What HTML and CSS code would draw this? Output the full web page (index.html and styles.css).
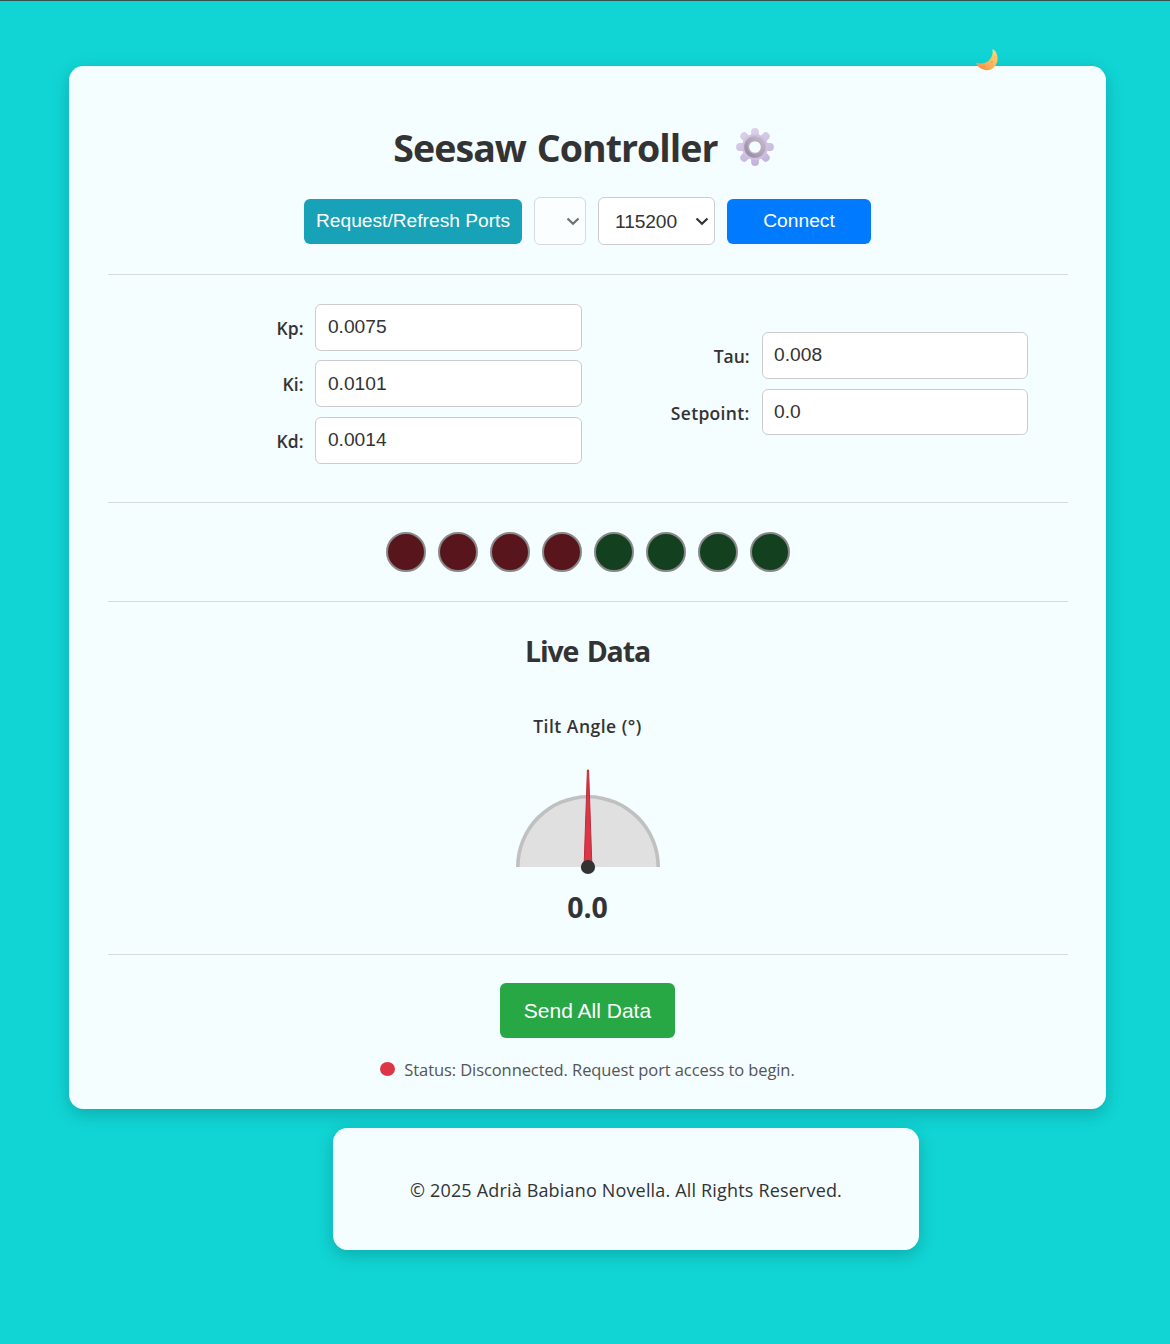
FILE: index.html
```html
<!DOCTYPE html>
<html lang="en">
<head>
<meta charset="utf-8">
<title>Seesaw Controller</title>
<link rel="stylesheet" href="styles.css">
</head>
<body>
<main class="card">
  <button class="theme-toggle" aria-label="Toggle theme">
    <svg width="22" height="22" viewBox="0 0 22 22">
      <defs><linearGradient id="moon" x1="1" y1="0" x2="0.2" y2="1"><stop offset="0" stop-color="#ffdf75"/><stop offset=".55" stop-color="#fbb95c"/><stop offset="1" stop-color="#f5904c"/></linearGradient></defs>
      <path d="M17.200.3C20.500 2.800 21.900 6.700 21.500 11 20.900 17 16.300 21.200 11 21.200 6.300 21.200 1.800 18.400.3 14.600c-.3-1 .3-1.300 1-.9C4 15 9 15 12.700 11.800 16 8.700 17.200 4.500 16.500 1.200c-.1-.8.200-1.200.7-.9z" fill="url(#moon)"/>
      <circle cx="15.800" cy="13.200" r="1.300" fill="#f3a850"/><circle cx="8" cy="17.600" r="1" fill="#ee9448"/><circle cx="18.900" cy="8" r=".8" fill="#f6b55a"/>
    </svg>
  </button>

  <h1 class="title"><span class="title-text">Seesaw Controller</span>
    <svg width="38" height="38" viewBox="0 0 38 38">
      <defs>
        <linearGradient id="teeth" gradientUnits="userSpaceOnUse" x1="12" y1="0" x2="24" y2="38"><stop offset="0" stop-color="#dcd3e9"/><stop offset="1" stop-color="#c3b2dc"/></linearGradient>
        <linearGradient id="ring" x1="1" y1="0" x2="0" y2="1"><stop offset="0" stop-color="#c5b9cd"/><stop offset="1" stop-color="#9b8ba5"/></linearGradient>
      </defs>
      <g fill="none" stroke="url(#teeth)" stroke-width="7.800" stroke-linecap="round">
        <path d="M19 4v30.010M4 19h30.010M8.200 8.200l21.600 21.600M29.800 8.200L8.200 29.800"/>
      </g>
      <circle cx="19" cy="19" r="13" fill="#cfc2df"/>
      <circle cx="19" cy="19" r="8.300" fill="#f4fdff" stroke="url(#ring)" stroke-width="5"/>
      <circle cx="19" cy="19" r="6.500" fill="#f4fdff" stroke="#b7abc0" stroke-width="1.300"/>
    </svg>
  </h1>

  <section class="connection">
    <button class="btn btn-ports">Request/Refresh Ports</button>
    <span class="select select-port"><svg width="14" height="9" viewBox="0 0 14 9"><path d="M1.500 1.500L7 6.800l5.500-5.300"/></svg></span>
    <span class="select select-baud">115200<svg width="14" height="9" viewBox="0 0 14 9"><path d="M1.500 1.500L7 6.800l5.500-5.300"/></svg></span>
    <button class="btn btn-connect">Connect</button>
  </section>

  <section class="params">
    <div class="column">
      <label class="field"><span class="name">Kp:</span><input value="0.0075"></label>
      <label class="field"><span class="name">Ki:</span><input value="0.0101"></label>
      <label class="field"><span class="name">Kd:</span><input value="0.0014"></label>
    </div>
    <div class="column">
      <label class="field"><span class="name">Tau:</span><input value="0.008"></label>
      <label class="field"><span class="name setpoint">Setpoint:</span><input value="0.0"></label>
    </div>
  </section>

  <section class="leds">
    <i class="led red"></i><i class="led red"></i><i class="led red"></i><i class="led red"></i>
    <i class="led green"></i><i class="led green"></i><i class="led green"></i><i class="led green"></i>
  </section>

  <section class="live">
    <h2 class="live-title">Live Data</h2>
    <div class="gauge-label">Tilt Angle (°)</div>
    <svg class="gauge" width="144" height="108" viewBox="0 0 144 108">
      <path d="M0 99a72 72 0 0 1 144 0z" fill="#c0c0c0"/>
      <path d="M3.600 99a68.400 68.400 0 0 1 136.800 0z" fill="#e0e0e0"/>
      <path d="M71.400 2h1.200L75.900 98h-7.800z" fill="#dc3545" stroke="#b92d3d" stroke-width="1"/>
      <circle cx="72" cy="99" r="7.100" fill="#333"/>
    </svg>
    <div class="value">0.0</div>
  </section>

  <section class="actions">
    <button class="btn btn-send">Send All Data</button>
    <div class="status"><i class="dot"></i><span>Status: Disconnected. Request port access to begin.</span></div>
  </section>
</main>
<footer class="footer"><span>© 2025 Adrià Babiano Novella. All Rights Reserved.</span></footer>
</body>
</html>
```
FILE: styles.css
```css
* { box-sizing: border-box; }
body {
  margin: 0;
  height: 1344px;
  padding: 65px 64px 0 69px;
  border-top: 1px solid #35514f;
  background: #11d5d5;
  color: #333;
  font-family: "Segoe UI", "Open Sans", sans-serif;
  font-size: 18px;
}
.card, .footer {
  background: #f4fdff;
  border-radius: 14.400px;
  box-shadow: 0 5px 18px rgba(0, 0, 0, .2);
}
.card { position: relative; height: 1043px; padding: 55px 38px 0 39px; }
.theme-toggle {
  position: absolute;
  left: 907px;
  top: -17px;
  padding: 0;
  border: 0;
  background: none;
  line-height: 0;
}
.title {
  display: flex;
  justify-content: center;
  align-items: center;
  gap: 18px;
  height: 52px;
  margin: 0 9px 1px 0;
  font-size: 37.500px;
  font-weight: 700;
}
.title-text { letter-spacing: -.95px; word-spacing: 2px; white-space: nowrap; }
.connection {
  display: flex;
  justify-content: center;
  align-items: center;
  gap: 12px;
  height: 101px;
  padding: 0 1px 6px 0;
  border-bottom: 1px solid #d6dcde;
}
.btn {
  padding: 0;
  border: 0;
  border-radius: 6px;
  color: #fff;
  font: 19.200px "Liberation Sans", Arial, sans-serif;
  height: 45px;
}
.btn-ports { width: 218px; background: #17a2b8; }
.btn-connect { width: 144px; background: #007bff; }
.select {
  display: flex;
  align-items: center;
  justify-content: space-between;
  height: 48px;
  padding: 1px 5px 0 16px;
  border: 1px solid #ccc;
  border-radius: 6px;
  background: #fff;
  font: 19.200px "Liberation Sans", Arial, sans-serif;
}
.select svg { fill: none; stroke: #333; stroke-width: 2.200; margin-left: auto; }
.select-port { width: 52px; opacity: .7; }
.select-baud { width: 117px; letter-spacing: -.1px; }
.params {
  display: flex;
  align-items: center;
  justify-content: flex-end;
  gap: 89px;
  height: 228px;
  padding: 0 40px 9.400px 0;
  border-bottom: 1px solid #d6dcde;
}
.column { display: grid; gap: 9.600px; }
.field { display: flex; align-items: center; justify-content: flex-end; gap: 12px; }
.name { font-weight: 600; font-size: 17.500px; padding-top: 1px; }
.setpoint { letter-spacing: .32px; }
.field input {
  width: 266.400px;
  height: 46.900px;
  padding: 0 11.500px .6px;
  border: 1px solid #ccc;
  border-radius: 6px;
  background: #fff;
  color: #333;
  font: 19.200px "Liberation Sans", Arial, sans-serif;
}
.leds {
  display: flex;
  align-items: center;
  justify-content: center;
  gap: 12px;
  height: 99px;
  border-bottom: 1px solid #d6dcde;
}
.led { width: 40px; height: 40px; border: 2px solid #888; border-radius: 50%; }
.red { background: #58151c; }
.green { background: #13401f; }
.live {
  display: flex;
  flex-direction: column;
  align-items: center;
  height: 353px;
  padding: 29px 1px 0 0;
  border-bottom: 1px solid #d6dcde;
}
.live-title { margin: 0; line-height: 40px; font-size: 28.500px; letter-spacing: -1.100px; word-spacing: 2px; }
.gauge-label { margin-top: 42px; line-height: 26px; font-weight: 600; font-size: 17.500px; letter-spacing: .5px; }
.gauge { margin: 29px 0 0 1px; }
.value { margin-top: 11px; line-height: 40px; font-size: 28.500px; font-weight: 700; }
.actions { display: flex; flex-direction: column; align-items: center; padding: 28px 1px 0 0; }
.btn-send { width: 175px; height: 55px; background: #28a745; font-size: 21px; }
.status {
  display: flex;
  align-items: center;
  gap: 9px;
  height: 26px;
  margin-top: 18px;
  color: #555;
  font-size: 16.500px;
  white-space: nowrap;
}
.status span { letter-spacing: -.09px; }
.dot { width: 15px; height: 14px; border-radius: 50%; background: #dc3545; }
.footer {
  display: flex;
  align-items: center;
  justify-content: center;
  width: 586px;
  height: 122px;
  margin: 19px 0 0 264px;
  padding-top: 2px;
  letter-spacing: .17px;
  white-space: nowrap;
}
```
